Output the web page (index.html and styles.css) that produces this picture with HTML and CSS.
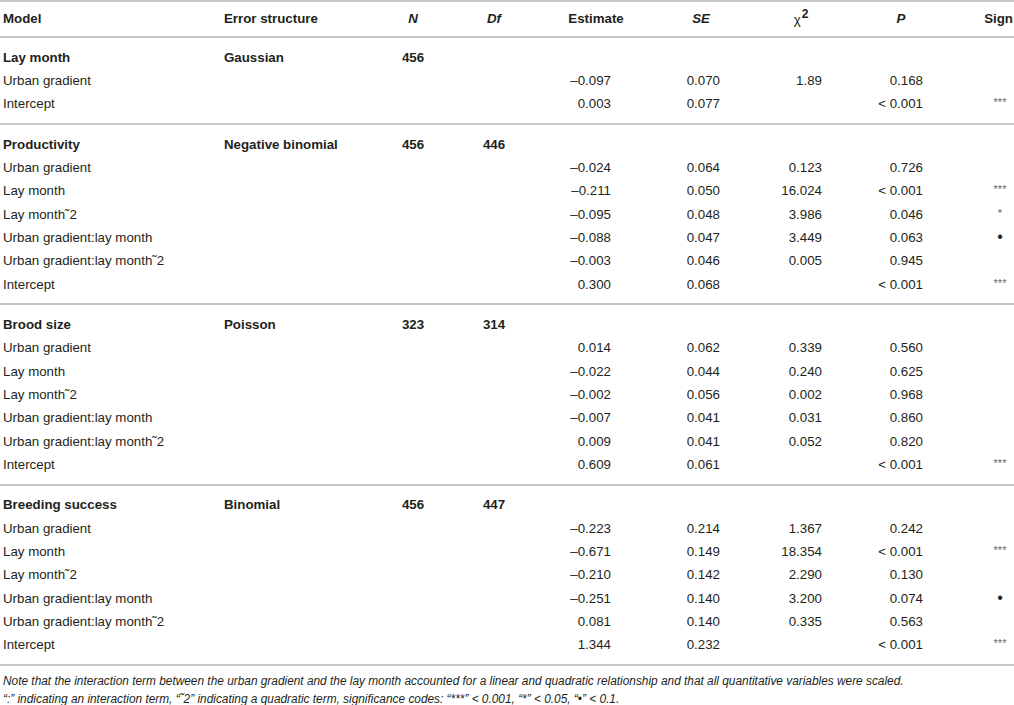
FILE: index.html
```html
<!DOCTYPE html>
<html lang="en">
<head>
    <meta charset="UTF-8">
    <meta name="viewport" content="width=device-width, initial-scale=1.0">
    <title>Model results</title>
    <link rel="stylesheet" href="styles.css">
</head>
<body>
    <table class="results">
        <colgroup>
            <col class="c-model">
            <col class="c-error">
            <col class="c-n">
            <col class="c-df">
            <col class="c-est">
            <col class="c-se">
            <col class="c-chi">
            <col class="c-p">
            <col class="c-sign">
        </colgroup>
        <thead>
            <tr>
                <th class="left">Model</th>
                <th class="left">Error structure</th>
                <th><em>N</em></th>
                <th><em>Df</em></th>
                <th>Estimate</th>
                <th><em>SE</em></th>
                <th class="chi">&chi;<sup>2</sup></th>
                <th><em>P</em></th>
                <th class="sign-head">Sign</th>
            </tr>
        </thead>
        <tbody>
            <tr class="grp">
                <td class="left"><strong>Lay month</strong></td>
                <td class="left"><strong>Gaussian</strong></td>
                <td class="mid"><strong>456</strong></td>
                <td class="mid"></td>
                <td></td><td></td><td></td><td></td><td></td>
            </tr>
            <tr>
                <td class="left">Urban gradient</td><td></td><td></td><td></td>
                <td class="est">&ndash;0.097</td><td class="se">0.070</td><td class="chi">1.89</td><td class="p">0.168</td><td class="sign"></td>
            </tr>
            <tr class="last">
                <td class="left">Intercept</td><td></td><td></td><td></td>
                <td class="est">0.003</td><td class="se">0.077</td><td class="chi"></td><td class="p">&lt; 0.001</td><td class="sign"><span class="stars">***</span></td>
            </tr>
        </tbody>
        <tbody>
            <tr class="grp">
                <td class="left"><strong>Productivity</strong></td>
                <td class="left"><strong>Negative binomial</strong></td>
                <td class="mid"><strong>456</strong></td>
                <td class="mid"><strong>446</strong></td>
                <td></td><td></td><td></td><td></td><td></td>
            </tr>
            <tr>
                <td class="left">Urban gradient</td><td></td><td></td><td></td>
                <td class="est">&ndash;0.024</td><td class="se">0.064</td><td class="chi">0.123</td><td class="p">0.726</td><td class="sign"></td>
            </tr>
            <tr>
                <td class="left">Lay month</td><td></td><td></td><td></td>
                <td class="est">&ndash;0.211</td><td class="se">0.050</td><td class="chi">16.024</td><td class="p">&lt; 0.001</td><td class="sign"><span class="stars">***</span></td>
            </tr>
            <tr>
                <td class="left">Lay month&#732;2</td><td></td><td></td><td></td>
                <td class="est">&ndash;0.095</td><td class="se">0.048</td><td class="chi">3.986</td><td class="p">0.046</td><td class="sign"><span class="stars">*</span></td>
            </tr>
            <tr>
                <td class="left">Urban gradient:lay month</td><td></td><td></td><td></td>
                <td class="est">&ndash;0.088</td><td class="se">0.047</td><td class="chi">3.449</td><td class="p">0.063</td><td class="sign"><span class="dot">&bull;</span></td>
            </tr>
            <tr>
                <td class="left">Urban gradient:lay month&#732;2</td><td></td><td></td><td></td>
                <td class="est">&ndash;0.003</td><td class="se">0.046</td><td class="chi">0.005</td><td class="p">0.945</td><td class="sign"></td>
            </tr>
            <tr class="last">
                <td class="left">Intercept</td><td></td><td></td><td></td>
                <td class="est">0.300</td><td class="se">0.068</td><td class="chi"></td><td class="p">&lt; 0.001</td><td class="sign"><span class="stars">***</span></td>
            </tr>
        </tbody>
        <tbody>
            <tr class="grp">
                <td class="left"><strong>Brood size</strong></td>
                <td class="left"><strong>Poisson</strong></td>
                <td class="mid"><strong>323</strong></td>
                <td class="mid"><strong>314</strong></td>
                <td></td><td></td><td></td><td></td><td></td>
            </tr>
            <tr>
                <td class="left">Urban gradient</td><td></td><td></td><td></td>
                <td class="est">0.014</td><td class="se">0.062</td><td class="chi">0.339</td><td class="p">0.560</td><td class="sign"></td>
            </tr>
            <tr>
                <td class="left">Lay month</td><td></td><td></td><td></td>
                <td class="est">&ndash;0.022</td><td class="se">0.044</td><td class="chi">0.240</td><td class="p">0.625</td><td class="sign"></td>
            </tr>
            <tr>
                <td class="left">Lay month&#732;2</td><td></td><td></td><td></td>
                <td class="est">&ndash;0.002</td><td class="se">0.056</td><td class="chi">0.002</td><td class="p">0.968</td><td class="sign"></td>
            </tr>
            <tr>
                <td class="left">Urban gradient:lay month</td><td></td><td></td><td></td>
                <td class="est">&ndash;0.007</td><td class="se">0.041</td><td class="chi">0.031</td><td class="p">0.860</td><td class="sign"></td>
            </tr>
            <tr>
                <td class="left">Urban gradient:lay month&#732;2</td><td></td><td></td><td></td>
                <td class="est">0.009</td><td class="se">0.041</td><td class="chi">0.052</td><td class="p">0.820</td><td class="sign"></td>
            </tr>
            <tr class="last">
                <td class="left">Intercept</td><td></td><td></td><td></td>
                <td class="est">0.609</td><td class="se">0.061</td><td class="chi"></td><td class="p">&lt; 0.001</td><td class="sign"><span class="stars">***</span></td>
            </tr>
        </tbody>
        <tbody>
            <tr class="grp">
                <td class="left"><strong>Breeding success</strong></td>
                <td class="left"><strong>Binomial</strong></td>
                <td class="mid"><strong>456</strong></td>
                <td class="mid"><strong>447</strong></td>
                <td></td><td></td><td></td><td></td><td></td>
            </tr>
            <tr>
                <td class="left">Urban gradient</td><td></td><td></td><td></td>
                <td class="est">&ndash;0.223</td><td class="se">0.214</td><td class="chi">1.367</td><td class="p">0.242</td><td class="sign"></td>
            </tr>
            <tr>
                <td class="left">Lay month</td><td></td><td></td><td></td>
                <td class="est">&ndash;0.671</td><td class="se">0.149</td><td class="chi">18.354</td><td class="p">&lt; 0.001</td><td class="sign"><span class="stars">***</span></td>
            </tr>
            <tr>
                <td class="left">Lay month&#732;2</td><td></td><td></td><td></td>
                <td class="est">&ndash;0.210</td><td class="se">0.142</td><td class="chi">2.290</td><td class="p">0.130</td><td class="sign"></td>
            </tr>
            <tr>
                <td class="left">Urban gradient:lay month</td><td></td><td></td><td></td>
                <td class="est">&ndash;0.251</td><td class="se">0.140</td><td class="chi">3.200</td><td class="p">0.074</td><td class="sign"><span class="dot">&bull;</span></td>
            </tr>
            <tr>
                <td class="left">Urban gradient:lay month&#732;2</td><td></td><td></td><td></td>
                <td class="est">0.081</td><td class="se">0.140</td><td class="chi">0.335</td><td class="p">0.563</td><td class="sign"></td>
            </tr>
            <tr class="last">
                <td class="left">Intercept</td><td></td><td></td><td></td>
                <td class="est">1.344</td><td class="se">0.232</td><td class="chi"></td><td class="p">&lt; 0.001</td><td class="sign"><span class="stars">***</span></td>
            </tr>
        </tbody>
    </table>

    <div class="note">
        <p>Note that the interaction term between the urban gradient and the lay month accounted for a linear and quadratic relationship and that all quantitative variables were scaled.</p>
        <p>&ldquo;:&rdquo; indicating an interaction term, &ldquo;&#732;2&rdquo; indicating a quadratic term, significance codes: &ldquo;***&rdquo; &lt; 0.001, &ldquo;*&rdquo; &lt; 0.05, &ldquo;&bull;&rdquo; &lt; 0.1.</p>
    </div>
</body>
</html>
```

FILE: styles.css
```css
body {
    margin: 0;
    padding: 0;
    background: #fff;
    color: #231f20;
    font-family: 'Liberation Sans', Arial, sans-serif;
    font-size: 13.3px;
}

.results {
    width: 1014px;
    border-collapse: collapse;
    table-layout: fixed;
    border-top: 2px solid #c6c6c6;
}

.c-model { width: 220px; }
.c-error { width: 160px; }
.c-n { width: 66px; }
.c-df { width: 96px; }
.c-est { width: 108px; }
.c-se { width: 102px; }
.c-chi { width: 98px; }
.c-p { width: 102px; }
.c-sign { width: 62px; }

th {
    height: 32px;
    padding: 0 0 2px 0;
    font-weight: bold;
    text-align: center;
    vertical-align: middle;
}

th em {
    font-style: italic;
}

th.left,
td.left {
    text-align: left;
    padding-left: 3px;
}

td.left + td.left {
    padding-left: 4px;
}

th.left + th.left {
    padding-left: 4px;
}

th.chi {
    font-weight: normal;
}

th.chi sup {
    font-weight: bold;
    font-size: 12px;
    position: relative;
    top: -1px;
    margin-left: 1px;
}

th.sign-head {
    text-align: right;
    padding-right: 1px;
}

tbody {
    border-top: 2px solid #c6c6c6;
}

td {
    height: 23.33px;
    padding: 0;
    white-space: nowrap;
    vertical-align: middle;
}

tr.grp td {
    padding-top: 7.5px;
}

tr.last td {
    padding-bottom: 7.5px;
}

td.mid {
    text-align: center;
}

td.est {
    text-align: right;
    padding-right: 39px;
}

td.se {
    text-align: right;
    padding-right: 32px;
}

td.chi {
    text-align: right;
    padding-right: 28px;
}

td.p {
    text-align: right;
    padding-right: 29px;
}

td.sign {
    text-align: right;
    padding-right: 6px;
}

.stars,
.dot {
    display: inline-block;
    width: 16px;
    text-align: center;
}

.stars {
    font-size: 11px;
    color: #666;
    vertical-align: 2px;
}

.dot {
    font-size: 16px;
    line-height: 10px;
}

.note {
    border-top: 2px solid #c6c6c6;
    padding-top: 6px;
    font-style: italic;
    font-size: 11.87px;
    line-height: 18px;
}

.note p {
    margin: 0;
    padding-left: 3px;
}
```
